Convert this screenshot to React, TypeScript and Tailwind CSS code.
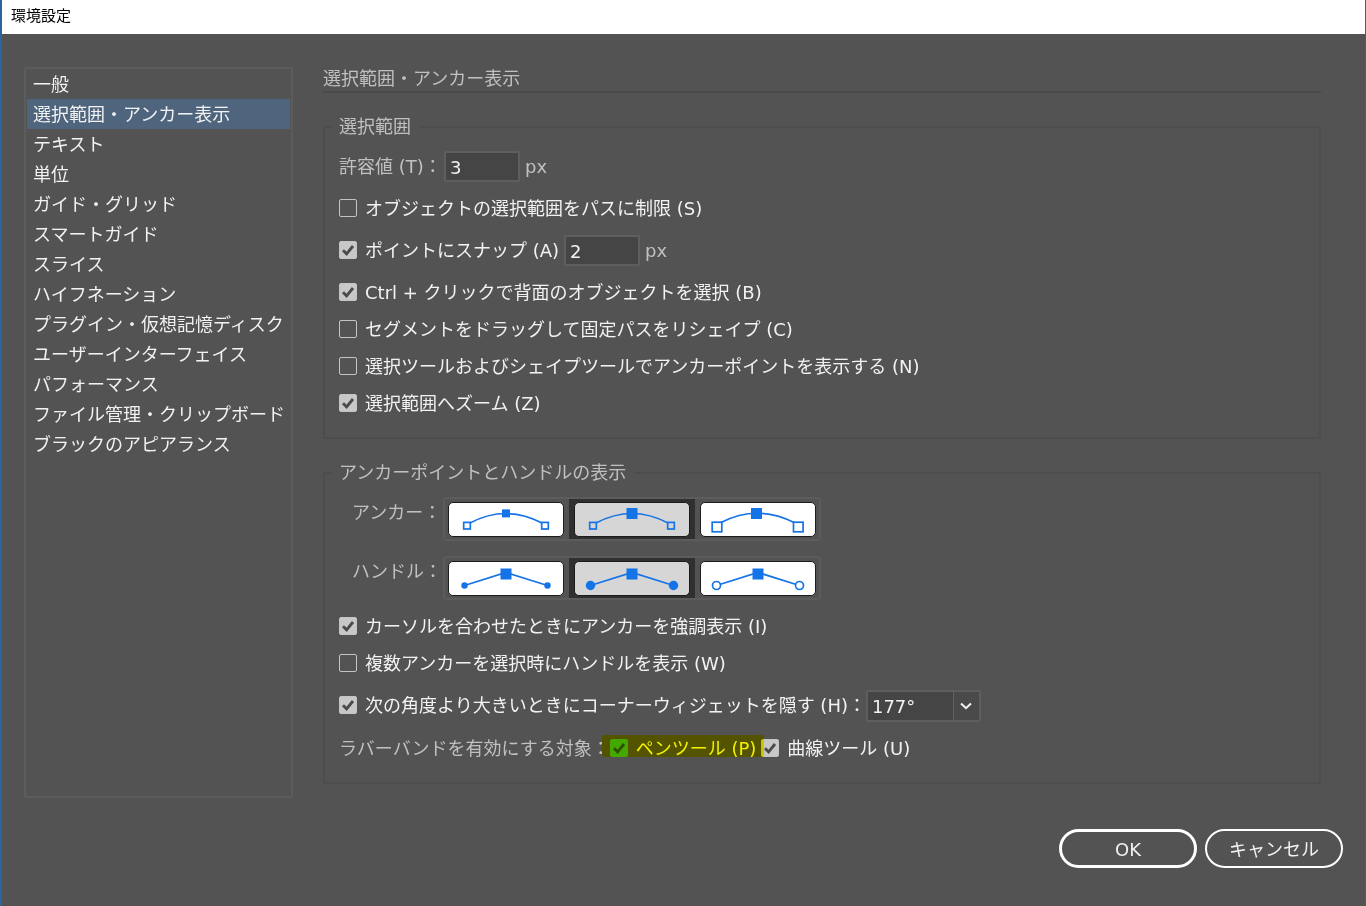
import { useState, ReactNode } from "react";

const categories = [
  "一般",
  "選択範囲・アンカー表示",
  "テキスト",
  "単位",
  "ガイド・グリッド",
  "スマートガイド",
  "スライス",
  "ハイフネーション",
  "プラグイン・仮想記憶ディスク",
  "ユーザーインターフェイス",
  "パフォーマンス",
  "ファイル管理・クリップボード",
  "ブラックのアピアランス",
];

const BLUE = "#1473e6";

function Check({
  label,
  checked = false,
  highlight = false,
}: {
  label: string;
  checked?: boolean;
  highlight?: boolean;
}) {
  const [on, setOn] = useState<boolean>(checked);

  return (
    <label className="relative flex items-center gap-2 h-[26px] whitespace-nowrap text-[#f2f2f2]">
      <span className="grid shrink-0">
        <input
          type="checkbox"
          checked={on}
          onChange={(event) => setOn(event.target.checked)}
          className={`col-start-1 row-start-1 appearance-none size-[18px] rounded-xs border border-[#c4c4c4] ${
            highlight
              ? "checked:bg-[#44a800] checked:border-[#44a800]"
              : "checked:bg-[#c8c8c8]"
          }`}
        />
        {on && (
          <svg
            viewBox="0 0 18 18"
            className="col-start-1 row-start-1 size-[18px] pointer-events-none"
            fill="none"
            stroke={highlight ? "#2c5200" : "#4a4a4a"}
            strokeWidth="2.8"
          >
            <path d="M4 9.2 7.6 12.8 14 5" />
          </svg>
        )}
      </span>
      <span className="pt-[2px]">{label}</span>
      {highlight && (
        <span className="absolute -left-2 -right-2 top-0 h-[22px] z-10 rounded-xs bg-[#ffff00] mix-blend-multiply pointer-events-none" />
      )}
    </label>
  );
}

function NumberField({ id, value, label }: { id: string; value: string; label?: string }) {
  return (
    <input
      id={id}
      type="text"
      aria-label={label}
      defaultValue={value}
      className="w-[76px] h-[31px] px-1 pt-[2px] rounded-xs border-2 border-[#5e5e5e] bg-[#454545] text-[#f2f2f2] outline-none"
    />
  );
}

function Group({ title, children }: { title: string; children: ReactNode }) {
  return (
    <fieldset className="mt-[21px] px-[14px] pb-[20px] min-w-0 rounded-xs border-2 border-[#4d4d4d]">
      <legend className="-ml-2 px-2 leading-[26px] text-[#c0c0c0]">{title}</legend>
      {children}
    </fieldset>
  );
}

function OptionRow({
  name,
  label,
  drawings,
}: {
  name: string;
  label: string;
  drawings: { title: string; art: ReactNode }[];
}) {
  const [selected, setSelected] = useState<number>(1);

  return (
    <div role="radiogroup" aria-label={label} className="flex items-center pl-[13px]">
      <span className="w-[91px] pb-3 text-[#c0c0c0] whitespace-nowrap">{label}：</span>
      <div className="flex py-[2px] rounded-sm shadow-[inset_0_0_0_2px_#5c5c5c]">
        {drawings.map((drawing, index) => (
          <label
            key={index}
            className={`flex items-center px-[5px] h-10 ${
              selected === index ? "bg-[#303030]" : ""
            }`}
          >
            <input
              type="radio"
              name={name}
              aria-label={drawing.title}
              checked={selected === index}
              onChange={() => setSelected(index)}
              className="sr-only"
            />
            <span
              className={`block rounded-[5px] border border-[#1c1c1c] ${
                selected === index ? "bg-[#d6d6d6]" : "bg-white"
              }`}
            >
              <svg
                viewBox="1 1 114 33"
                className="block w-[114px] h-[33px]"
                fill="none"
                stroke={BLUE}
                strokeWidth="1.7"
              >
                {drawing.art}
              </svg>
            </span>
          </label>
        ))}
      </div>
    </div>
  );
}

const anchorDrawings = [
  {
    title: "アンカー 小",
    art: (
      <>
        <path d="M22 21Q58 2 94 21" />
        <rect x="15.7" y="20.4" width="6.6" height="6.6" />
        <rect x="93.7" y="20.4" width="6.6" height="6.6" />
        <rect x="54" y="7.4" width="8" height="8" fill={BLUE} stroke="none" />
      </>
    ),
  },
  {
    title: "アンカー 中",
    art: (
      <>
        <path d="M22 21Q58 2 94 21" />
        <rect x="15.7" y="20.4" width="6.6" height="6.6" />
        <rect x="93.7" y="20.4" width="6.6" height="6.6" />
        <rect x="52.5" y="6" width="11" height="11" fill={BLUE} stroke="none" />
      </>
    ),
  },
  {
    title: "アンカー 大",
    art: (
      <>
        <path d="M21 20.5Q57 2 94 20.5" />
        <rect x="12.2" y="20.2" width="9.6" height="9.6" />
        <rect x="93.5" y="20.2" width="9.6" height="9.6" />
        <rect x="51" y="6" width="11" height="11" fill={BLUE} stroke="none" />
      </>
    ),
  },
];

const handleDrawings = [
  {
    title: "ハンドル 小",
    art: (
      <>
        <path d="M16.5 24.5 58 11.5 99.5 24.5" />
        <circle cx="16.5" cy="24.5" r="3.2" fill={BLUE} stroke="none" />
        <circle cx="99.5" cy="24.5" r="3.2" fill={BLUE} stroke="none" />
        <rect x="52.5" y="7.5" width="11" height="11" fill={BLUE} stroke="none" />
      </>
    ),
  },
  {
    title: "ハンドル 中",
    art: (
      <>
        <path d="M16.5 24.5 58 11.5 99.5 24.5" />
        <circle cx="16.5" cy="24.5" r="4.7" fill={BLUE} stroke="none" />
        <circle cx="99.5" cy="24.5" r="4.7" fill={BLUE} stroke="none" />
        <rect x="52.5" y="7.5" width="11" height="11" fill={BLUE} stroke="none" />
      </>
    ),
  },
  {
    title: "ハンドル 中空",
    art: (
      <>
        <path d="M20.5 23.2 58 11.5 95.5 23.2" />
        <circle cx="16.5" cy="24.5" r="4" />
        <circle cx="99.5" cy="24.5" r="4" />
        <rect x="52.5" y="7.5" width="11" height="11" fill={BLUE} stroke="none" />
      </>
    ),
  },
];

export default function App() {
  const [active, setActive] = useState<number>(1);

  return (
    <div
      lang="ja"
      className="flex flex-col min-h-screen border-l-2 border-r border-[#2a6699] bg-[#535353] text-[18px] leading-[26px] font-['DejaVu_Sans','Noto_Sans_CJK_JP',sans-serif]"
    >
      <header className="h-[34px] px-[9px] bg-white text-black text-[15px] leading-8">
        環境設定
      </header>

      <div className="flex gap-[30px] pt-[33px] px-[22px]">
        <nav className="w-[269px] shrink-0 rounded-xs border-2 border-[#5c5c5c] px-px pb-3">
          <ul>
            {categories.map((category, index) => (
              <li key={category}>
                <button
                  type="button"
                  onClick={() => setActive(index)}
                  className={`block w-full h-[30px] px-[6px] pt-[2px] text-left whitespace-nowrap text-[#f2f2f2] ${
                    active === index ? "bg-[#4f657d]" : ""
                  }`}
                >
                  {category}
                </button>
              </li>
            ))}
          </ul>
        </nav>

        <main className="flex-1 min-w-0 pr-[22px] pb-[14px]">
          <h1 className="h-[26px] leading-6 border-b-2 border-[#4a4a4a] text-[#c0c0c0]">
            選択範囲・アンカー表示
          </h1>

          <Group title="選択範囲">
            <div className="flex flex-col gap-[11px] pt-2 pb-px">
              <div className="flex items-center h-9 text-[#c0c0c0]">
                <label htmlFor="tolerance" className="w-[105px] pt-[2px] whitespace-nowrap">
                  許容値 (T)：
                </label>
                <NumberField id="tolerance" value="3" />
                <span className="ml-[5px] pt-[2px]">px</span>
              </div>
              <Check label="オブジェクトの選択範囲をパスに制限 (S)" />
              <div className="flex items-center gap-[5px] h-9 text-[#c0c0c0]">
                <Check label="ポイントにスナップ (A)" checked />
                <NumberField id="snap" value="2" label="ポイントにスナップ" />
                <span className="pt-[2px]">px</span>
              </div>
              <Check label="Ctrl + クリックで背面のオブジェクトを選択 (B)" checked />
              <Check label="セグメントをドラッグして固定パスをリシェイプ (C)" />
              <Check label="選択ツールおよびシェイプツールでアンカーポイントを表示する (N)" />
              <Check label="選択範囲へズーム (Z)" checked />
            </div>
          </Group>

          <Group title="アンカーポイントとハンドルの表示">
            <div className="flex flex-col gap-[15px] pt-[11px]">
              <OptionRow name="anchor" label="アンカー" drawings={anchorDrawings} />
              <OptionRow name="handle" label="ハンドル" drawings={handleDrawings} />
            </div>
            <div className="flex flex-col gap-[11px] pt-[13px]">
              <Check label="カーソルを合わせたときにアンカーを強調表示 (I)" checked />
              <Check label="複数アンカーを選択時にハンドルを表示 (W)" />
              <div className="flex items-center h-9">
                <Check label="次の角度より大きいときにコーナーウィジェットを隠す (H)：" checked />
                <span className="grid w-[115px] h-[31px]">
                  <select
                    aria-label="角度"
                    defaultValue="177"
                    className="col-start-1 row-start-1 appearance-none px-1 pt-[2px] rounded-xs border-2 border-[#5e5e5e] bg-[#454545] text-[#f2f2f2] outline-none"
                  >
                    <option value="177">177°</option>
                    <option value="135">135°</option>
                    <option value="90">90°</option>
                  </select>
                  <span className="col-start-1 row-start-1 justify-self-end flex items-center justify-center w-[26px] my-[2px] mr-[2px] border-l border-[#626262] bg-[#4a4a4a] pointer-events-none">
                    <svg
                      viewBox="0 0 12 8"
                      className="w-3 h-2"
                      fill="none"
                      stroke="#f2f2f2"
                      strokeWidth="2"
                    >
                      <path d="M1 1.5 6 6.2 11 1.5" />
                    </svg>
                  </span>
                </span>
              </div>
              <div className="flex items-center">
                <span className="pt-[2px] text-[#c0c0c0] whitespace-nowrap">
                  ラバーバンドを有効にする対象：
                </span>
                <div className="flex gap-[5px]">
                  <Check label="ペンツール (P)" checked highlight />
                  <Check label="曲線ツール (U)" checked />
                </div>
              </div>
            </div>
          </Group>
        </main>
      </div>

      <footer className="flex justify-end gap-2 pt-[31px] px-[22px] pb-[38px] text-[#f2f2f2]">
        <button
          type="button"
          className="w-[138px] h-[39px] pt-[2px] rounded-full border-3 border-white"
        >
          OK
        </button>
        <button
          type="button"
          className="w-[138px] h-[39px] pt-[2px] rounded-full border-2 border-white"
        >
          キャンセル
        </button>
      </footer>
    </div>
  );
}
